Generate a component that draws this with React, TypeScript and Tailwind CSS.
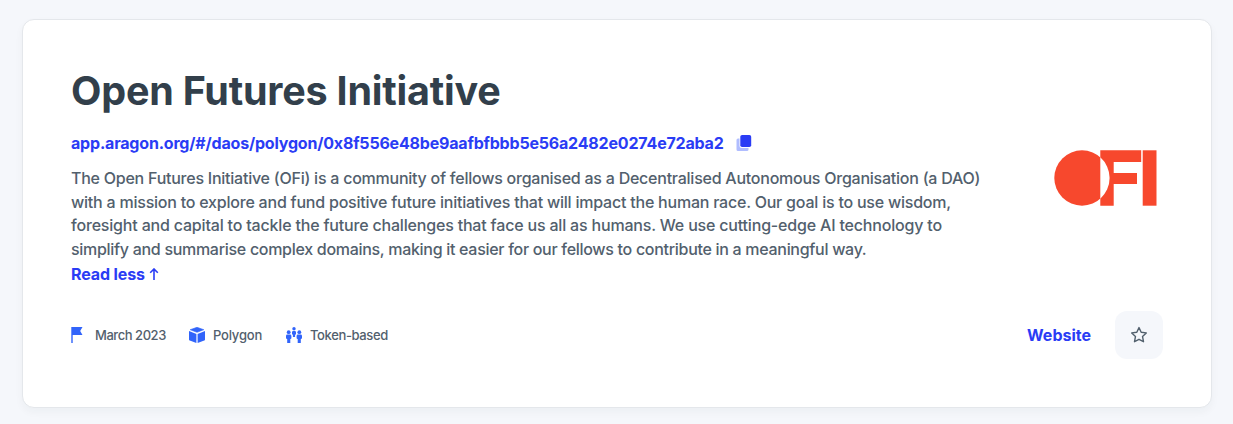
import { useState } from "react";

const ADDRESS = "app.aragon.org/#/daos/polygon/0x8f556e48be9aafbfbbb5e56a2482e0274e72aba2";

const summary = [
  { text: "The Open Futures Initiative (OFi) is a community of fellows organised as a Decentralised Autonomous Organisation (a DAO)", tracking: "tracking-[-0.242px]" },
  { text: "with a mission to explore and fund positive future initiatives that will impact the human race. Our goal is to use wisdom,", tracking: "tracking-[-0.222px]" },
  { text: "foresight and capital to tackle the future challenges that face us all as humans. We use cutting-edge AI technology to", tracking: "tracking-[-0.185px]" },
  { text: "simplify and summarise complex domains, making it easier for our fellows to contribute in a meaningful way.", tracking: "tracking-[-0.295px]" },
];

function CopyIcon() {
  return (
    <svg width="16" height="16" viewBox="0 0 16 16" fill="none">
      <path d="M2 3.5h9a1.5 1.5 0 0 1 1.5 1.5v9.500a1.500 1.500 0 0 1-1.500 1.500H2A1.500 1.500 0 0 1 .5 14.500V5A1.500 1.500 0 0 1 2 3.500Z" fill="#b0bdff" />
      <rect x="3.500" y="0" width="12" height="13" rx="2" fill="#fff" />
      <rect x="4.300" y="0" width="10.900" height="12" rx="1.800" fill="#2a3cf5" />
    </svg>
  );
}

function FlagIcon() {
  return (
    <svg width="16" height="16" viewBox="0 0 16 16" fill="#3164fa">
      <path d="M.3 0h11.200L9.200 4l2.300 4H1.700v8H.3Z" />
    </svg>
  );
}

function CubeIcon() {
  return (
    <svg width="16" height="16" viewBox="0 0 16 16" fill="#3164fa">
      <path d="M8 .300 14.800 2.700 8 5.300 1.200 2.700Z" stroke="#3164fa" strokeWidth=".6" strokeLinejoin="round" />
      <path d="M0 4.100 7.400 6.900V16L.8 13.600Q0 13.300 0 12.500Z" />
      <path d="M16 4.100 8.600 6.900V16l6.600-2.400q.8-.3.800-1.100Z" />
    </svg>
  );
}

function CommunityIcon() {
  return (
    <svg width="16" height="16" viewBox="0 0 16 16" fill="#3164fa">
      <circle cx="8" cy="1.700" r="1.700" />
      <path d="M7.200 4h1.600q1.200 0 1.200 1.200v1.500q0 .8-.9 1v2.400H6.900V7.700q-.9-.2-.9-1V5.200Q6 4 7.200 4Z" />
      <circle cx="2.700" cy="5.200" r="1.900" />
      <path d="M1.400 7.600H4q1.400 0 1.400 1.400v1.900q0 .9-1.100 1.200V16H1.200v-3.900Q0 11.800 0 10.900V9q0-1.400 1.400-1.400Z" />
      <circle cx="13.300" cy="5.200" r="1.900" />
      <path d="M12 7.600h2.600Q16 7.600 16 9v1.900q0 .9-1.200 1.200V16h-3.100v-3.900q-1.100-.3-1.100-1.200V9q0-1.400 1.400-1.400Z" />
    </svg>
  );
}

function StarIcon() {
  return (
    <svg width="18" height="18" viewBox="0 0 18 18" fill="none" stroke="#52606d" strokeWidth="1.400" strokeLinejoin="round">
      <path d="m9 1.600 2.200 4.700 5.100.6-3.800 3.500 1 5.300L9 13.300l-4.500 2.400 1-5.300-3.800-3.500 5.100-.6Z" />
    </svg>
  );
}

function Logo() {
  return (
    <svg width="103" height="56" viewBox="0 0 103 56" fill="#f7482d">
      <circle cx="28" cy="28" r="27.700" />
      <path d="M46.300 .3H87.200V12H59.700v11H83v11H59.700v21.700H46.300Z" />
      <path d="M46.300 7.300a27.700 27.700 0 0 1 0 41.400Z" fill="#fff" />
      <path d="M88.700 .3h13.800v55.400H88.700Z" />
    </svg>
  );
}

export default function App() {
  const [favorite, setFavorite] = useState(false);

  return (
    <div className="h-[424px] bg-[#f5f7fb] pt-[19px] pr-[21px] pl-[22px] font-['Inter',sans-serif]">
      <div className="h-[389px] rounded-xl border border-[#e4e7eb] bg-white px-12 pt-12 shadow-[0_4px_8px_rgba(31,41,51,0.04)]">
        <div className="flex h-[243px] justify-between">
          <div className="flex flex-col items-start">
            <h1 className="h-12 whitespace-nowrap text-[39.500px] leading-[46px] font-bold tracking-[-0.220px] text-[#323f4b]">
              Open Futures Initiative
            </h1>
            <div className="mt-[15px] flex h-6 items-center gap-3">
              <a href={`https://${ADDRESS}`} className="whitespace-nowrap text-base leading-6 font-bold tracking-[-0.190px] text-[#2a3cf5]">
                {ADDRESS}
              </a>
              <button aria-label="Copy address">
                <CopyIcon />
              </button>
            </div>
            <p className="mt-3 text-base leading-[23.700px] font-medium text-[#52606d]">
              {summary.map((line) => (
                <span key={line.text} className={`block whitespace-nowrap ${line.tracking}`}>
                  {line.text}
                </span>
              ))}
            </p>
            <button className="flex items-center gap-1 text-base leading-6 font-bold text-[#2a3cf5]">
              <span className="tracking-[-0.120px]">Read less</span>
              <svg width="10" height="12" viewBox="0 0 10 12" fill="none" stroke="currentColor" strokeWidth="1.600">
                <path d="M5 12V1.200M1.200 4.800 5 1l3.800 3.800" />
              </svg>
            </button>
          </div>
          <div className="mt-[82px] mr-1.5 shrink-0">
            <Logo />
          </div>
        </div>
        <div className="flex h-12 items-center justify-between">
          <div className="flex items-center text-[13px] leading-5 font-medium text-[#52606d]">
            <div className="flex w-[118px] items-center gap-2">
              <FlagIcon />
              <span className="whitespace-nowrap tracking-[-0.450px]">March 2023</span>
            </div>
            <div className="flex w-[97px] items-center gap-2">
              <CubeIcon />
              <span className="whitespace-nowrap tracking-[-0.200px]">Polygon</span>
            </div>
            <div className="flex items-center gap-2">
              <CommunityIcon />
              <span className="whitespace-nowrap tracking-[-0.370px]">Token-based</span>
            </div>
          </div>
          <div className="flex items-center gap-6">
            <a href="#" className="text-base font-bold text-[#2a3cf5]">Website</a>
            <button
              aria-label="Favorite"
              aria-pressed={favorite}
              onClick={() => setFavorite(!favorite)}
              className="flex size-12 items-center justify-center rounded-xl bg-[#f5f7fb]"
            >
              <StarIcon />
            </button>
          </div>
        </div>
      </div>
    </div>
  );
}
